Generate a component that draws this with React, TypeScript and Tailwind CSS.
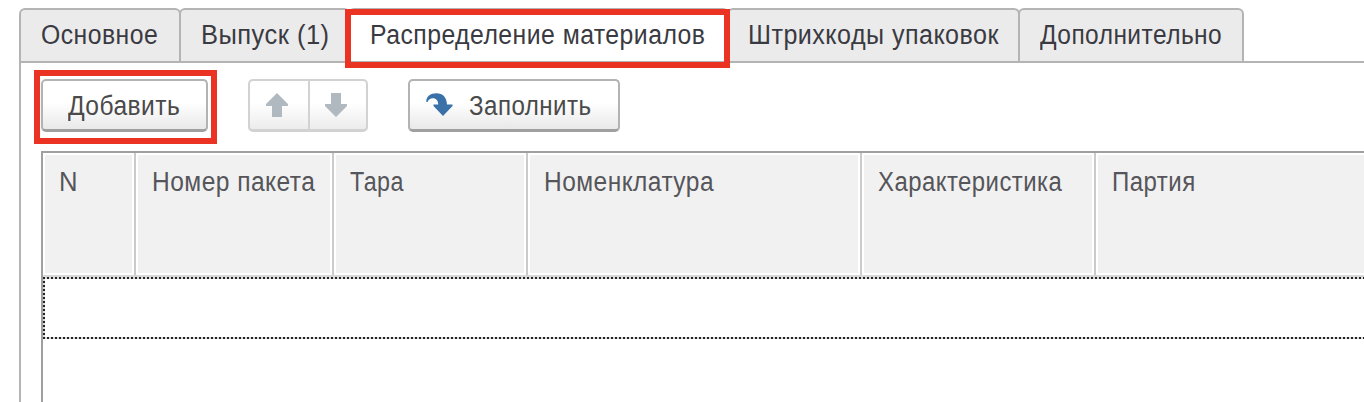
import type { ReactNode } from 'react';

const tabs = [
  { label: 'Основное', cell: 'w-[162px] pl-[20px]', text: 'scale-x-[0.918]' },
  { label: 'Выпуск (1)', cell: 'w-[171px] pl-[20px]', text: 'scale-x-[0.945]' },
  { label: 'Распределение материалов', cell: 'w-[381px] pl-[20px]', text: 'scale-x-[0.918]', active: true },
  { label: 'Штрихкоды упаковок', cell: 'w-[293px] pl-[19px]', text: 'scale-x-[0.929]' },
  { label: 'Дополнительно', cell: 'w-[226px] pl-[20px]', text: 'scale-x-[0.907]' },
];

const columns = [
  { label: 'N', cell: 'w-[93px]', text: 'scale-x-[0.95]' },
  { label: 'Номер пакета', cell: 'w-[198px]', text: 'scale-x-[0.91]' },
  { label: 'Тара', cell: 'w-[194px]', text: 'scale-x-[0.864]' },
  { label: 'Номенклатура', cell: 'w-[334px]', text: 'scale-x-[0.908]' },
  { label: 'Характеристика', cell: 'w-[234px]', text: 'scale-x-[0.887]' },
  { label: 'Партия', cell: 'w-[280px]', text: 'scale-x-[0.89]' },
];

function Highlight({ className }: { className: string }) {
  return <div className={`pointer-events-none absolute z-10 border-6 border-[#eb3323] ${className}`} />;
}

function Button({ className, children }: { className: string; children: ReactNode }) {
  return (
    <button
      className={`flex h-[53px] shrink-0 items-center rounded-[5px] border-2 border-b-3 border-[#b3b3b3] border-b-[#a0a0a0] bg-linear-to-b from-white from-45% to-[#e9e9e9] tracking-[0.5px] text-[#4a4a4a] ${className}`}
    >
      {children}
    </button>
  );
}

function MoveArrow({ down = false }: { down?: boolean }) {
  return (
    <svg width="22" height="24" viewBox="0 0 22 24" className={down ? 'rotate-180' : ''}>
      <path d="M11 0 22 11V13H16V24H6V13H0V11Z" fill="#b0b9c0" />
    </svg>
  );
}

export default function App() {
  return (
    <div className="h-[402px] w-[1364px] overflow-hidden bg-white pt-2 pl-[19px] font-['Liberation_Sans',Arial,sans-serif] text-[27px] leading-[30px] tracking-[0.5px] whitespace-nowrap">
      <div className="relative flex h-[55px] border-b-2 border-[#b4b4b4]">
        {tabs.map((t, i) => (
          <div
            key={t.label}
            className={`h-[53px] shrink-0 rounded-t-[6px] border-2 border-b-0 border-[#b4b4b4] pt-[10px] text-[#3a3a42] ${i > 0 ? '-ml-[2px]' : ''} ${t.active ? 'bg-white' : 'bg-[#ebebeb]'} ${t.cell}`}
          >
            <span className={`inline-block origin-left ${t.text}`}>{t.label}</span>
          </div>
        ))}
        <Highlight className="top-[1px] left-[326px] h-[59px] w-[385px]" />
      </div>

      <div className="h-[339px] border-l-2 border-[#b4b4b4] pt-4 pl-5">
        <div className="flex h-[72px] items-start">
          <div className="relative mr-10">
            <Button className="w-[167px] pl-[25px]">
              <span className="mt-[2px] inline-block origin-left scale-x-[0.91]">Добавить</span>
            </Button>
            <Highlight className="-top-[9px] -left-[7px] h-[74px] w-[183px]" />
          </div>
          <div className="mr-10 flex h-[53px] w-[120px] rounded-[5px] border-2 border-b-3 border-[#d2d2d2] bg-linear-to-b from-white from-45% to-[#ececec]">
            <button className="flex w-[60px] items-center border-r-2 border-[#d2d2d2] pl-[16px]">
              <MoveArrow />
            </button>
            <button className="flex w-[56px] items-center pl-[15px]">
              <MoveArrow down />
            </button>
          </div>
          <Button className="w-[212px] pl-[16px]">
            <svg width="28" height="24" viewBox="0 0 28 24" className="mr-[15px] shrink-0">
              <path
                d="M.3 9C0 3.500 4.500.2 10.500.2C16.500.2 20.700 4 21 11.500H26.500V13L17 23L7.500 13V11.500H12.200C12.200 7.500 9.800 5 6.500 5.300C4.500 5.500 2.500 6.500 1.500 9Z"
                fill="#3a71a8"
              />
            </svg>
            <span className="mt-[2px] inline-block origin-left scale-x-[0.894]">Заполнить</span>
          </Button>
        </div>

        <div className="h-[251px] border-t-2 border-l-2 border-[#a0a0a0]">
          <div className="flex h-[124px] border-b-2 border-[#d8d8d8]">
            {columns.map((c) => (
              <div key={c.label} className={`h-[122px] shrink-0 border-r-2 border-[#cbcbcb] bg-white p-[2px] ${c.cell}`}>
                <div className="h-full bg-[#f1f1f1] pt-[12px] pl-[14px] text-[#55555a]">
                  <span className={`inline-block origin-left ${c.text}`}>{c.label}</span>
                </div>
              </div>
            ))}
          </div>
          <div className="flex h-[62px] flex-col">
            <div className="h-[2px] bg-[repeating-linear-gradient(90deg,#222_0_2px,#ddd_2px_4px)]" />
            <div className="w-[2px] flex-1 bg-[repeating-linear-gradient(180deg,#ddd_0_2px,#222_2px_4px)]" />
            <div className="h-[2px] bg-[repeating-linear-gradient(90deg,#222_0_2px,#ddd_2px_4px)]" />
          </div>
        </div>
      </div>
    </div>
  );
}
